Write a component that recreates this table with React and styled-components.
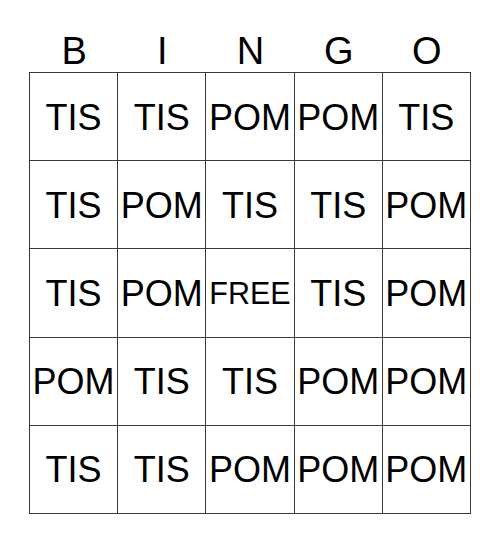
import React from "react";
import styled, { createGlobalStyle } from "styled-components";

const GlobalStyle = createGlobalStyle`
  body {
    margin: 0;
    background: #ffffff;
    font-family: "Liberation Sans", Arial, sans-serif;
    color: #000000;
  }
`;

const Card = styled.div`
  width: 442px;
  margin-left: 29px;
`;

const Header = styled.div`
  display: grid;
  grid-template-columns: repeat(5, 88.2px);
  height: 72px;
  align-items: end;
  padding-left: 1px;
  box-sizing: border-box;
  padding-bottom: 2px;
`;

const Letter = styled.div`
  font-size: 38px;
  line-height: 38px;
  text-align: center;
`;

const Board = styled.div`
  display: grid;
  grid-template-columns: repeat(5, 88.2px);
  grid-auto-rows: 88.2px;
  border-top: 1px solid #3a3a3a;
  border-left: 1px solid #3a3a3a;
  width: max-content;
`;

const Cell = styled.div`
  display: flex;
  align-items: center;
  justify-content: center;
  padding-top: 2px;
  border-right: 1px solid #3a3a3a;
  border-bottom: 1px solid #3a3a3a;
  font-size: ${(props) => (props.$free ? "30.5px" : "36px")};
  white-space: nowrap;
  overflow: hidden;
`;

const LETTERS = ["B", "I", "N", "G", "O"];

const ROWS = [
  ["TIS", "TIS", "POM", "POM", "TIS"],
  ["TIS", "POM", "TIS", "TIS", "POM"],
  ["TIS", "POM", "FREE", "TIS", "POM"],
  ["POM", "TIS", "TIS", "POM", "POM"],
  ["TIS", "TIS", "POM", "POM", "POM"],
];

const App = () => {
  return (
    <>
      <GlobalStyle />
      <Card>
        <Header>
          {LETTERS.map((l) => (
            <Letter key={l}>{l}</Letter>
          ))}
        </Header>
        <Board>
          {ROWS.flat().map((word, i) => (
            <Cell key={i} $free={word === "FREE"}>
              {word}
            </Cell>
          ))}
        </Board>
      </Card>
    </>
  );
};

export default App;
